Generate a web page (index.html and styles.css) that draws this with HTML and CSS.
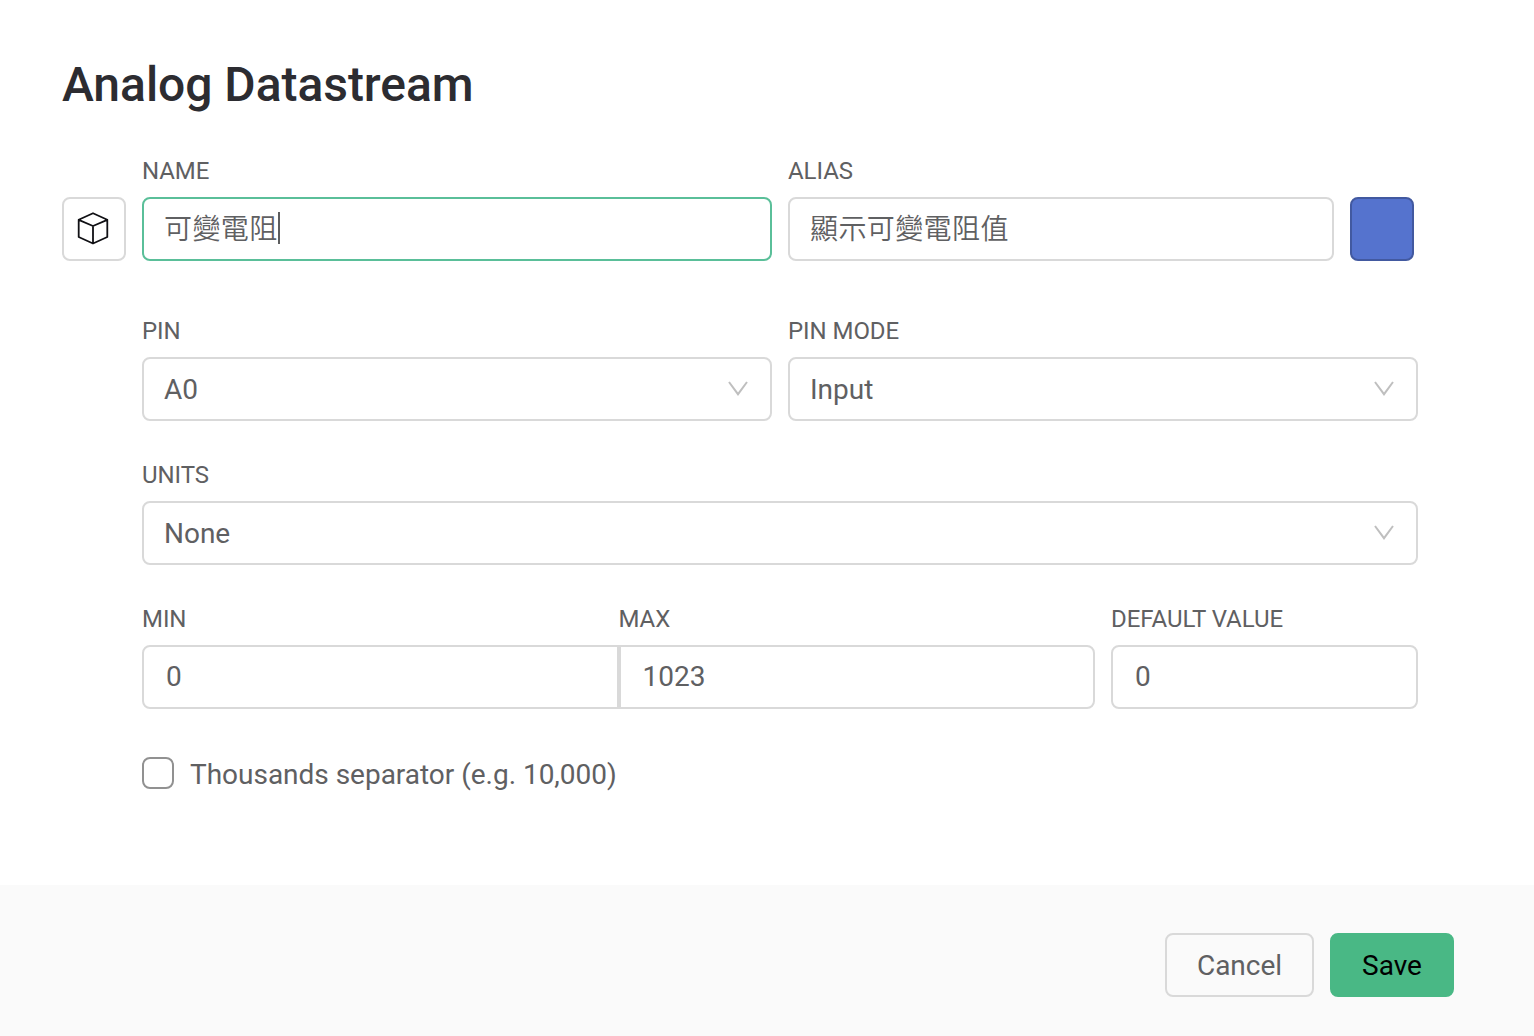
FILE: index.html
```html
<!DOCTYPE html>
<html lang="zh-Hant">
<head>
<meta charset="utf-8">
<title>Analog Datastream</title>
<link rel="stylesheet" href="styles.css">
</head>
<body>
<main class="dialog">
  <section class="content">
    <h1 class="title">Analog Datastream</h1>
    <div class="identity">
      <button class="icon-button" aria-label="Icon">
        <svg width="32" height="34" viewBox="0 0 32 34" fill="none" stroke="#101014" stroke-width="1.8" stroke-linejoin="round"><path d="M16 1.2 30.3 7.8V25L16 31.5 1.7 25V7.8ZM1.7 7.8 16 14 30.3 7.8M16 14V31.5"/></svg>
      </button>
      <div class="field name"><div class="label">NAME</div><div class="control focused"><span class="cjk">可變電阻</span><span class="caret"></span></div></div>
      <div class="field alias"><div class="label">ALIAS</div><div class="control"><span class="cjk">顯示可變電阻值</span></div></div>
      <button class="color-button" aria-label="Color"></button>
    </div>
    <div class="form">
      <div class="row halves">
        <div class="field"><div class="label">PIN</div><div class="control select"><span>A0</span><svg class="arrow" viewBox="0 0 20 16"><path d="M1 1 10 13.2 19 1"/></svg></div></div>
        <div class="field"><div class="label">PIN MODE</div><div class="control select"><span>Input</span><svg class="arrow" viewBox="0 0 20 16"><path d="M1 1 10 13.2 19 1"/></svg></div></div>
      </div>
      <div class="field"><div class="label">UNITS</div><div class="control select"><span>None</span><svg class="arrow" viewBox="0 0 20 16"><path d="M1 1 10 13.2 19 1"/></svg></div></div>
      <div class="row values">
        <div class="field"><div class="label">MIN</div><div class="control number min">0</div></div>
        <div class="field"><div class="label">MAX</div><div class="control number max">1023</div></div>
        <div class="field default"><div class="label">DEFAULT VALUE</div><div class="control number">0</div></div>
      </div>
      <div class="check"><span class="checkbox"></span><span class="check-text">Thousands separator (e.g. 10,000)</span></div>
    </div>
  </section>
  <footer class="footer">
    <button class="button cancel">Cancel</button>
    <button class="button save">Save</button>
  </footer>
</main>
</body>
</html>
```

FILE: styles.css
```css
* { box-sizing: border-box; }
body {
  margin: 0;
  background: #fff;
  color: #5f6062;
  font: 400 28px/36px Roboto, "Noto Sans CJK TC", sans-serif;
  letter-spacing: -.02px;
}
button { font: inherit; letter-spacing: inherit; color: inherit; padding: 0; }
.dialog { display: flex; flex-direction: column; height: 1036px; }
.content { flex: 1; padding: 53px 116px 0 62px; }
.title {
  margin: 0 0 36px;
  color: #2c2c31;
  font-size: 48px;
  font-weight: 500;
  line-height: 64px;
  letter-spacing: -.04px;
}
.identity { display: flex; align-items: flex-end; gap: 16px; }
.icon-button, .color-button { flex: none; width: 64px; height: 64px; border-radius: 8px; }
.icon-button {
  display: flex;
  align-items: center;
  justify-content: center;
  padding-right: 2px;
  border: 2px solid #d9d9d9;
  background: #fff;
}
.color-button { border: 2px solid #4259a0; background: #5573ce; }
.name { width: 630px; }
.alias { width: 546px; }
.label { margin-bottom: 8px; font-size: 24px; line-height: 36px; letter-spacing: -.06px; white-space: nowrap; }
.control {
  display: flex;
  align-items: center;
  height: 64px;
  padding: 0 22px 0 20px;
  border: 2px solid #d9d9d9;
  border-radius: 8px;
  background: #fff;
}
.focused { border-color: #5abf99; }
.cjk { padding-bottom: 4px; font-family: "Noto Sans CJK TC", sans-serif; font-weight: 350; letter-spacing: .4px; }
.caret { width: 2px; height: 32px; margin-bottom: 2px; background: #5c5d5f; }
.form { display: flex; flex-direction: column; gap: 36px; margin: 52px 0 0 80px; }
.row { display: grid; }
.halves { grid-template-columns: 1fr 1fr; gap: 16px; }
.select { justify-content: space-between; }
.select span { padding-top: 2px; }
.arrow { width: 20px; height: 16px; margin-bottom: 1px; fill: none; stroke: #bfbfbf; stroke-width: 2; }
.values { grid-template-columns: 476.5px 476.5px 307px; }
.default { margin-left: 16px; width: 307px; }
.min { border-radius: 8px 0 0 8px; }
.max { border-radius: 0 8px 8px 0; }
.number { padding-left: 22px; }
.check { display: flex; align-items: center; gap: 16px; margin-top: 8px; }
.check-text { padding-top: 4px; }
.checkbox { width: 32px; height: 32px; border: 2px solid #919191; border-radius: 8px; }
.footer {
  display: flex;
  justify-content: flex-end;
  gap: 16px;
  height: 151px;
  padding: 48px 80px 0 0;
  background: #fafafa;
}
.button { height: 64px; padding-top: 2px; border-radius: 8px; border: 2px solid #d9d9d9; }
.cancel { width: 149px; background: #fafafa; }
.save { width: 124px; border-color: #49b885; background: #49b885; color: #000; }
```
